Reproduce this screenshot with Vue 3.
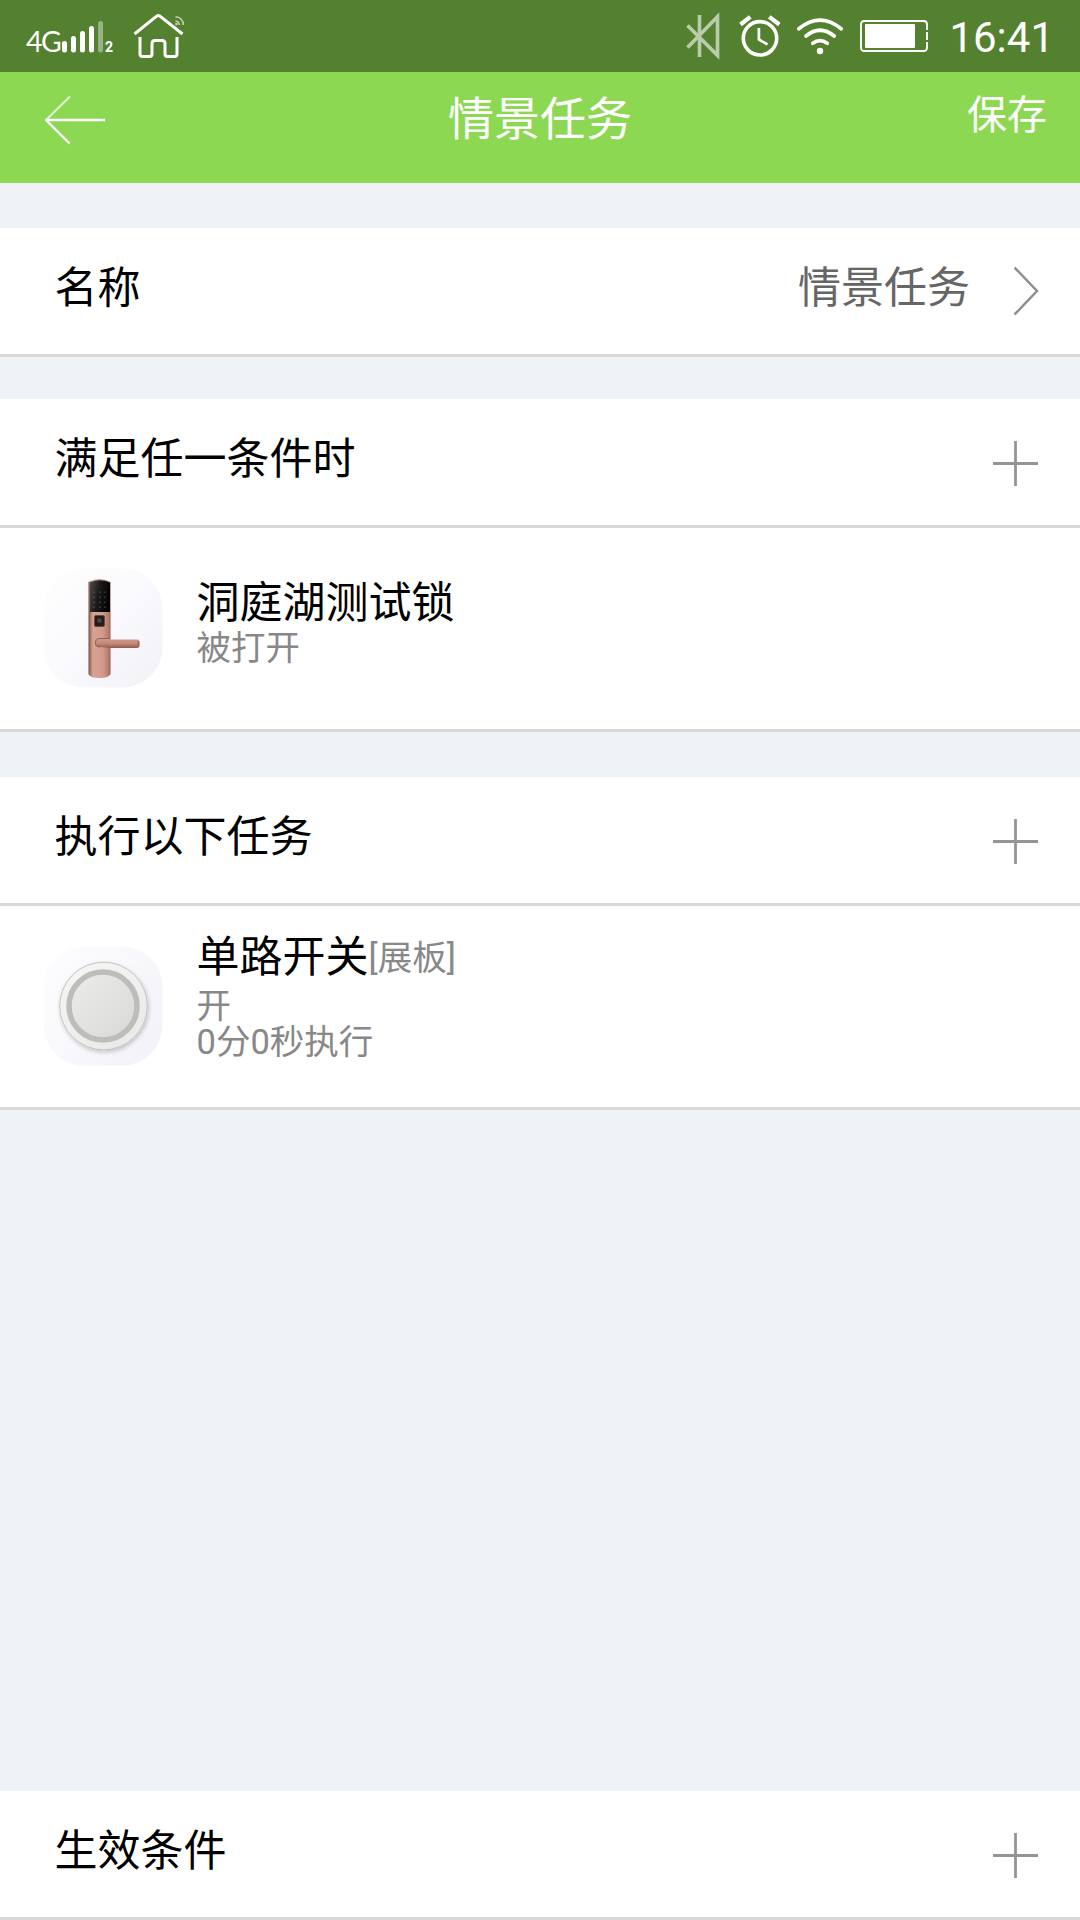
<template>
  <div class="page">
    <div class="status-bar">
      <span class="network">4G</span>
      <svg class="signal" width="43" height="72" viewBox="61 0 43 72">
        <g stroke="#fff" stroke-width="5" stroke-linecap="round">
          <path d="M64.5 43.5V50M73.5 38.5V50M82.5 33.5V50M91.5 28.5V50" />
          <path d="M100.5 23.5V50" opacity="0.4" />
        </g>
      </svg>
      <span class="sim">2</span>
      <svg class="home" width="54" height="72" viewBox="132 0 54 72" fill="none" stroke="#fff">
        <path d="M134.5 34 156 16.6Q158.300 14.500 160.600 16.600L182.500 34" stroke-width="3" />
        <path d="M140 37V54Q140 56.500 142.500 56.500H149.500Q152 56.500 152 54V43.500Q152 40.500 155 40.500H162Q165 40.500 165 43.500V54Q165 56.500 167.500 56.500H174.500Q177 56.500 177 54V37" stroke-width="3" />
        <g stroke-width="1.5" opacity="0.65">
          <path d="M175.500 21A4.500 4.500 0 0 1 179.500 25M175.500 16.800A8 8 0 0 1 183.400 25" />
          <circle cx="176.500" cy="24" r="0.600" />
        </g>
      </svg>

      <div class="status-right">
        <svg width="36" height="72" viewBox="686 0 36 72" fill="none" stroke="#fff" opacity="0.6">
          <path d="M699.500 15V57M687.500 25.500 717.500 55.300V16.700L687.500 47.500" stroke-width="3.600" />
        </svg>
        <svg class="alarm" width="42" height="72" viewBox="739 0 42 72" fill="none" stroke="#fff">
          <circle cx="760" cy="38.300" r="16.700" stroke-width="3.600" />
          <path d="M758.900 28V39.500L767.500 44.500" stroke-width="2.700" />
          <path d="M740.500 24.500 750.300 16.800M769.300 16.800 779.300 24.500" stroke-width="4.200" />
        </svg>
        <svg class="wifi" width="48" height="72" viewBox="796 0 48 72" fill="none" stroke="#fff" stroke-linecap="round">
          <path d="M798.800 28.800Q820 11.500 841.200 28.800M806 36Q820 24.500 834.200 36M812.800 43.300Q820 38 827.200 43.300" stroke-width="3.700" />
          <circle cx="820" cy="51" r="3.200" fill="#fff" stroke="none" />
        </svg>
        <svg class="battery" width="70" height="72" viewBox="859 0 70 72" fill="none" stroke="#fff">
          <path d="M927 30V24.500Q927 21 923.500 21H864.500Q861 21 861 24.500V47.500Q861 51 864.500 51H923.500Q927 51 927 47.500V42" stroke-width="1.900" />
          <path d="M927 32V40" stroke-width="1.900" />
          <rect x="865" y="24" width="50" height="24" rx="1" fill="#fff" stroke="none" />
        </svg>
        <span class="time">16:41</span>
      </div>
    </div>

    <header class="nav">
      <button class="btn-back">
        <svg width="62" height="50" viewBox="44 95 62 50" fill="none" stroke="#fff" stroke-width="2">
          <path d="M45.500 120H105" stroke-width="2.500" />
          <path d="M70 96.500 46 120" opacity="0.75" />
          <path d="M46 120 69.500 143.500" stroke-width="2.400" />
        </svg>
      </button>
      <h1>情景任务</h1>
      <button class="btn-save">保存</button>
    </header>

    <section class="group">
      <div class="row">
        <span class="label">名称</span>
        <span class="value">{{ name }}</span>
        <svg class="chevron" width="26" height="50" viewBox="0 0 26 50" fill="none" stroke="#8e8e8e" stroke-width="2.500">
          <path d="M0.500 1.500 23 25 0.500 48.500" />
        </svg>
      </div>
    </section>

    <section v-for="g in groups" :key="g.title" class="group">
      <div class="row">
        <span class="label">{{ g.title }}</span>
        <svg class="plus" width="45" height="45" viewBox="0 0 45 45" stroke="#959595" stroke-width="2.800">
          <path d="M0 22.500H45M22.500 0V45" />
        </svg>
      </div>
      <div v-for="d in g.devices" :key="d.name" class="device" :class="d.type">
        <svg v-if="d.type === 'lock'" class="device-icon" width="120" height="120" viewBox="0 0 120 120">
          <defs>
            <linearGradient id="tile" x1="0" y1="0" x2="1" y2="1">
              <stop offset="0" stop-color="#fefefe" />
              <stop offset="0.500" stop-color="#faf9fd" />
              <stop offset="1" stop-color="#f2f1f7" />
            </linearGradient>
            <linearGradient id="body" x1="0" x2="1" y1="0" y2="0">
              <stop offset="0" stop-color="#6f4c42" />
              <stop offset="0.080" stop-color="#a87465" />
              <stop offset="0.200" stop-color="#d8a393" />
              <stop offset="0.650" stop-color="#d29a8a" />
              <stop offset="0.920" stop-color="#b47b6b" />
              <stop offset="1" stop-color="#8b5a4c" />
            </linearGradient>
            <linearGradient id="handle" x1="0" x2="0" y1="0" y2="1">
              <stop offset="0" stop-color="#cf9888" />
              <stop offset="0.500" stop-color="#c48a7a" />
              <stop offset="1" stop-color="#8f5b4d" />
            </linearGradient>
            <linearGradient id="glass" x1="0" x2="1" y1="0" y2="0.300">
              <stop offset="0" stop-color="#4c4c4c" />
              <stop offset="0.500" stop-color="#1c1a1b" />
              <stop offset="1" stop-color="#050505" />
            </linearGradient>
          </defs>
          <rect x="0.500" y="0.500" width="119" height="119" rx="40" fill="url(#tile)" />
          <path d="M45.500 14Q56 8 67.500 14V106Q66 110 56 110Q47 110 45.500 106Z" fill="url(#body)" />
          <path d="M47 14.500Q56.500 10 67 14.500V44H47Z" fill="url(#glass)" />
          <g fill="#8d8d8d">
            <template v-for="y in [24, 29, 34, 39]" :key="y">
              <circle v-for="x in [51, 57, 62]" :key="x" :cx="x" :cy="y" r="0.600" />
            </template>
          </g>
          <rect x="51.500" y="47.500" width="10" height="11" rx="1.500" fill="#241d1c" stroke="#694a42" />
          <rect x="54.500" y="50.500" width="4" height="4" fill="#4f4848" />
          <path d="M55 70.500H67V71.500H94Q96.500 71.500 96.500 74.500V77Q96.500 80 94 80H67L57 79Q52 79 52 75Q52 71 55 70.500Z" fill="url(#handle)" />
          <path d="M57 79Q52 78.500 52.500 75Q52 71 56 70.500H67" fill="none" stroke="#8e6254" stroke-width="1" />
          <path d="M95.500 73V79" stroke="#95685d" stroke-width="1.500" />
        </svg>
        <svg v-else class="device-icon" width="120" height="120" viewBox="0 0 120 120">
          <defs>
            <linearGradient id="tile2" x1="0" y1="0" x2="1" y2="0.700">
              <stop offset="0" stop-color="#fdfdfe" />
              <stop offset="1" stop-color="#f5f3fa" />
            </linearGradient>
            <linearGradient id="rim" x1="0" y1="0" x2="0.600" y2="1">
              <stop offset="0" stop-color="#f7f7f6" />
              <stop offset="1" stop-color="#eaeae7" />
            </linearGradient>
            <linearGradient id="face" x1="0" y1="0" x2="1" y2="1">
              <stop offset="0" stop-color="#ececeb" />
              <stop offset="1" stop-color="#d8d8d7" />
            </linearGradient>
            <filter id="shade" x="-20%" y="-20%" width="140%" height="150%">
              <feDropShadow dx="1" dy="2" stdDeviation="2" flood-color="#000" flood-opacity="0.220" />
            </filter>
          </defs>
          <rect x="0.500" y="0.500" width="119" height="119" rx="40" fill="url(#tile2)" />
          <circle cx="60.500" cy="60" r="43.800" fill="url(#rim)" stroke="#c4c4c2" filter="url(#shade)" />
          <circle cx="60" cy="60" r="34" fill="url(#face)" stroke="#bdbdbc" stroke-width="5.500" />
        </svg>
        <div class="device-info">
          <div class="device-name">{{ d.name }}<span v-if="d.room">[{{ d.room }}]</span></div>
          <div v-for="line in d.lines" :key="line" class="device-line">{{ line }}</div>
        </div>
      </div>
    </section>

    <section class="group bottom">
      <div class="row">
        <span class="label">生效条件</span>
        <svg class="plus" width="45" height="45" viewBox="0 0 45 45" stroke="#959595" stroke-width="2.800">
          <path d="M0 22.500H45M22.500 0V45" />
        </svg>
      </div>
    </section>
  </div>
</template>

<script setup>
import { ref } from 'vue'

const name = ref('情景任务')

const groups = ref([
  {
    title: '满足任一条件时',
    devices: [{ type: 'lock', name: '洞庭湖测试锁', lines: ['被打开'] }]
  },
  {
    title: '执行以下任务',
    devices: [{ type: 'switch', name: '单路开关', room: '展板', lines: ['开', '0分0秒执行'] }]
  }
])
</script>

<style>
body { margin: 0; background: #eff3f6; }
</style>

<style scoped>
.page {
  width: 1080px;
  height: 1920px;
  display: flex;
  flex-direction: column;
  background: #eff3f6;
  color: #000;
  font-family: Roboto, "Noto Sans CJK SC", sans-serif;
  overflow: hidden;
}
svg { display: block; flex: none; }
.status-bar {
  height: 72px;
  flex: none;
  display: flex;
  box-sizing: border-box;
  padding: 0 26px 0 26px;
  background: #548130;
  color: #fff;
}
.network {
  width: 35px;
  font-family: Lato, sans-serif;
  font-weight: 400;
  font-size: 28.5px;
  line-height: 83px;
  letter-spacing: -1.5px;
}
.sim {
  width: 10px;
  margin-left: 1px;
  font-size: 14px;
  font-weight: 700;
  line-height: 94px;
}
.home { margin-left: 17px; }
.status-right { display: flex; margin-left: auto; }
.alarm { margin-left: 17px; }
.wifi { margin-left: 15px; }
.battery { margin-left: 15px; }
.time {
  margin-left: 20px;
  font-size: 42px;
  line-height: 75px;
}
.nav {
  height: 111px;
  flex: none;
  display: flex;
  justify-content: space-between;
  background: #8dd853;
  color: #fff;
}
button {
  padding: 0;
  border: none;
  background: none;
  color: inherit;
  font-family: inherit;
}
.btn-back {
  width: 148px;
  padding: 23px 0 0 44px;
  display: flex;
  align-items: flex-start;
}
.nav h1 {
  margin: 0;
  font-size: 46px;
  font-weight: 400;
  line-height: 94px;
}
.btn-save {
  width: 148px;
  padding-right: 33px;
  text-align: right;
  font-size: 40px;
  line-height: 88px;
  align-self: flex-start;
}
.group { flex: none; margin-bottom: 45px; }
.nav + .group { margin-top: 45px; margin-bottom: 42px; }
.bottom { margin-top: auto; margin-bottom: 0; }
.row {
  height: 126px;
  display: flex;
  align-items: center;
  padding: 0 42px 0 54.5px;
  background: #fff;
  border-bottom: 3px solid #d8d8d8;
}
.label, .value {
  font-size: 43px;
  line-height: 60px;
  padding-bottom: 6px;
}
.label { flex: 1; }
.value { color: #666; margin-right: 44px; }
.chevron { margin-right: -2px; }
.plus { margin-top: 2px; }
.device {
  height: 201px;
  display: flex;
  background: #fff;
  border-bottom: 3px solid #d8d8d8;
}
.device-icon { margin: 40px 33.5px 0 43px; }
.device-info { padding-top: 47px; }
.device-name {
  height: 56px;
  font-size: 43px;
  line-height: 57px;
}
.device-name span {
  font-size: 34.5px;
  color: #888;
  vertical-align: 2px;
}
.device-line {
  font-size: 34.5px;
  line-height: 35px;
  color: #888;
}
.switch .device-info { padding-top: 23px; }
.switch .device-name { height: 59px; }
.switch .device-line { line-height: 36px; }
</style>
